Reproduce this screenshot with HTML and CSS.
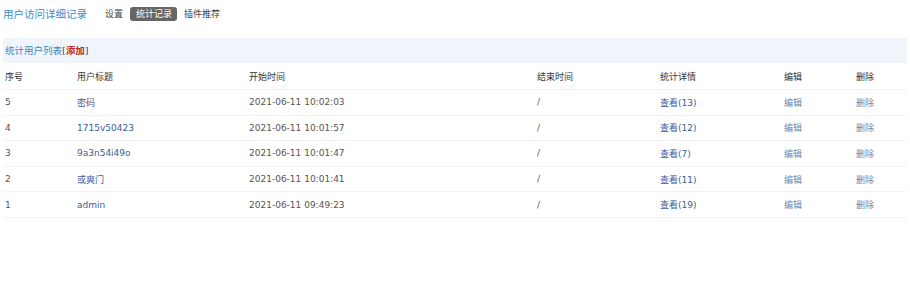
FILE: index.html
```html
<!DOCTYPE html>
<html lang="zh">
<head>
<meta charset="utf-8">
<title>用户访问详细记录</title>
<link rel="stylesheet" href="styles.css">
</head>
<body>
<div class="top">
  <h1 class="title">用户访问详细记录</h1>
  <nav class="nav">
    <a class="tab">设置</a>
    <a class="tab active">统计记录</a>
    <a class="tab">插件推荐</a>
  </nav>
</div>
<div class="bar">统计用户列表<span class="br">[</span><a class="add">添加</a><span class="br">]</span></div>
<table class="list">
  <colgroup>
    <col class="c1"><col class="c2"><col class="c3"><col class="c4"><col class="c5"><col class="c6"><col class="c7">
  </colgroup>
  <thead>
    <tr><th>序号</th><th>用户标题</th><th>开始时间</th><th>结束时间</th><th>统计详情</th><th>编辑</th><th>删除</th></tr>
  </thead>
  <tbody>
    <tr><td>5</td><td><a class="lnk">密码</a></td><td>2021-06-11 10:02:03</td><td>/</td><td><a class="lnk">查看(13)</a></td><td><a class="op">编辑</a></td><td><a class="op">删除</a></td></tr>
    <tr><td>4</td><td><a class="lnk">1715v50423</a></td><td>2021-06-11 10:01:57</td><td>/</td><td><a class="lnk">查看(12)</a></td><td><a class="op">编辑</a></td><td><a class="op">删除</a></td></tr>
    <tr><td>3</td><td><a class="lnk">9a3n54i49o</a></td><td>2021-06-11 10:01:47</td><td>/</td><td><a class="lnk">查看(7)</a></td><td><a class="op">编辑</a></td><td><a class="op">删除</a></td></tr>
    <tr><td>2</td><td><a class="lnk">或爽门</a></td><td>2021-06-11 10:01:41</td><td>/</td><td><a class="lnk">查看(11)</a></td><td><a class="op">编辑</a></td><td><a class="op">删除</a></td></tr>
    <tr><td>1</td><td><a class="lnk">admin</a></td><td>2021-06-11 09:49:23</td><td>/</td><td><a class="lnk">查看(19)</a></td><td><a class="op">编辑</a></td><td><a class="op">删除</a></td></tr>
  </tbody>
</table>
</body>
</html>
```
FILE: styles.css
```css
html, body {
  margin: 0;
  padding: 0;
  background: #fff;
}
body {
  padding: 0 3px;
  font-family: "DejaVu Sans", "Noto Sans CJK SC", sans-serif;
  font-size: 9px;
  color: #333;
}
.top {
  display: flex;
  align-items: center;
  height: 27px;
}
.title {
  margin: 0;
  font-size: 10.5px;
  font-weight: normal;
  color: #3b8ac4;
  width: 98px;
}
.nav {
  display: flex;
  align-items: center;
}
.tab {
  font-size: 9px;
  color: #444;
  padding: 2px 4px;
  line-height: 10px;
  margin-right: 3px;
}
.tab.active {
  background: #666;
  color: #fff;
  border-radius: 3px;
  padding: 2px 5px 2px 6px;
}
.bar {
  margin-top: 11px;
  height: 25px;
  line-height: 25px;
  background: #f0f5fc;
  padding-left: 2px;
  color: #3b8ac4;
  font-size: 9.5px;
}
.br { color: #2a4d7e; }
.add {
  color: #c0251b;
  font-weight: bold;
}
.list {
  width: 100%;
  border-collapse: collapse;
  table-layout: fixed;
}
.c1 { width: 72px; }
.c2 { width: 172px; }
.c3 { width: 288px; }
.c4 { width: 123px; }
.c5 { width: 124px; }
.c6 { width: 72px; }
.list th, .list td {
  text-align: left;
  font-weight: normal;
  padding: 0 0 0 2px;
  height: 24.6px;
  border-bottom: 1px solid #f3f3f3;
  white-space: nowrap;
}
.list th {
  color: #333;
  height: 26px;
}
.list td { color: #555; }
.lnk { color: #3a5d96; }
.op { color: #6f87ab; }
```
